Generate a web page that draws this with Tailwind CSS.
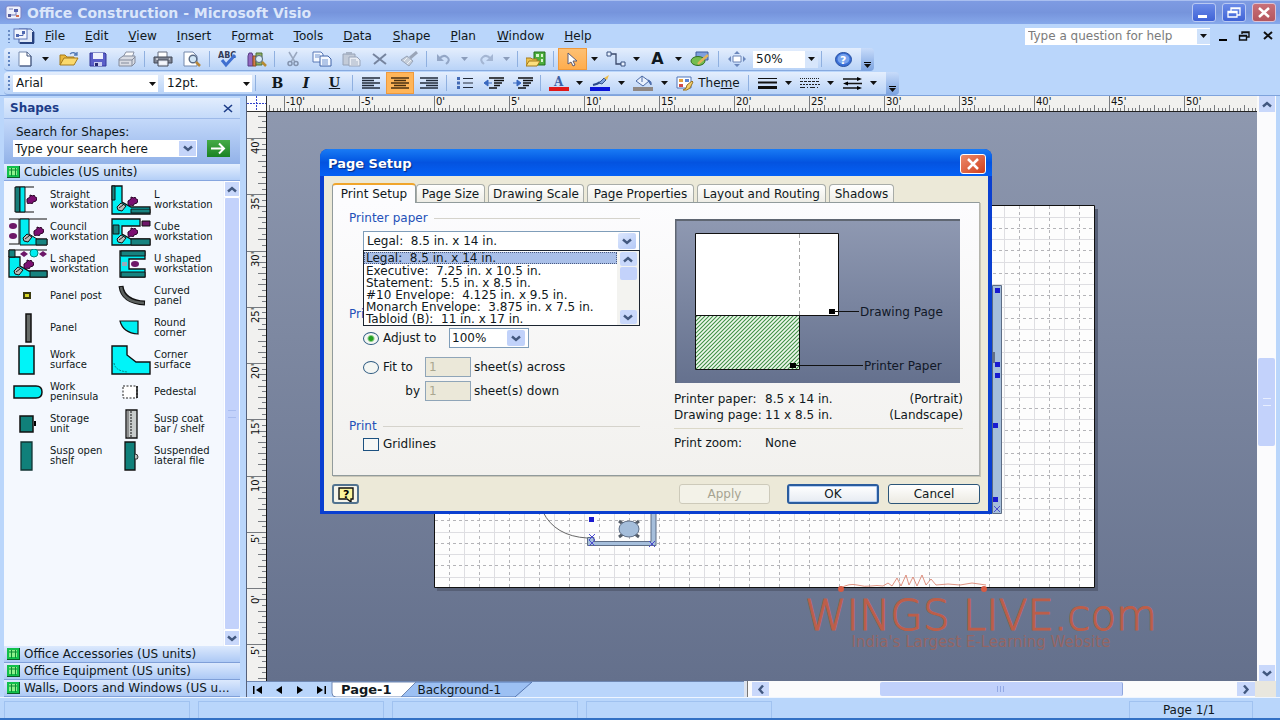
<!DOCTYPE html>
<html lang="en">
<head>
<meta charset="utf-8">
<title>Office Construction - Microsoft Visio</title>
<script src="https://cdn.jsdelivr.net/npm/@tailwindcss/browser@4"></script>
</head>
<body class="h-screen overflow-hidden bg-[#bad6fb] font-['DejaVu_Sans',Verdana,sans-serif] text-xs text-[#101820]">
<svg class="hidden">
  <defs>
    <symbol id="dd" viewBox="0 0 7 4"><path d="M0 0h7L3.500 4z" fill="#111"/></symbol>
    <symbol id="ddg" viewBox="0 0 7 4"><path d="M0 0h7L3.500 4z" fill="#8b9dbb"/></symbol>
    <symbol id="chev" viewBox="0 0 10 7"><path d="M1 1.500l4 3.500 4-3.500" fill="none" stroke="#42587f" stroke-width="2.400"/></symbol>
    <symbol id="sten" viewBox="0 0 13 12"><path d="M0 0h13v12H0z" fill="#0a5b26"/><path d="M0 0h12v11H0z" fill="#12c04c"/><path d="M2 2h8v7H2z" fill="#8df08a"/><path d="M2 4h8M4.500 2v8M8.500 2v8" stroke="#0b8a32"/></symbol>
    <symbol id="chair" viewBox="0 0 11 10"><path d="M1 5l3-2V1l3 1 1-1 1 2 2 1-1 3-3 1-1 2-2-1-2 1-1-2z" fill="#7b0f72" stroke="#2b0528"/></symbol>
    <symbol id="pc" viewBox="0 0 11 10"><path d="M1 5l4-4 5 3-4 5-4-1z" fill="#b9bdb9" stroke="#111"/><path d="M3 6l4-3" stroke="#222"/></symbol>
  </defs>
</svg>
<div class="flex h-full flex-col">

  <!-- Title bar -->
  <header class="flex h-6 shrink-0 items-center border-t border-[#a9bff0] bg-linear-to-b from-[#7e9be2] via-[#7694dc] to-[#86a8ea] pr-1 pl-[5px]">
    <svg class="h-4 w-[17px]" viewBox="0 0 17 16"><rect x="1" y="1" width="15" height="13" rx="2" fill="#eef0fb" stroke="#7c83c4"/><path d="M3 9h3v3H3z" fill="#555a9b"/><path d="M9 4h4v3H9z" fill="#5560ad"/><path d="M6 10h5V7M4 4h4" stroke="#777cb8" fill="none"/><path d="M11 10h3v2h-3z" fill="#d06b50"/></svg>
    <h1 class="ml-[5px] flex-1 text-sm font-bold text-[#dbe6fa]">Office Construction - Microsoft Visio</h1>
    <div class="flex gap-[6px]">
      <button aria-label="Minimize" class="h-[19px] w-6 rounded-[3px] border border-[#b9c9f2] bg-linear-to-b from-[#6b8be8] to-[#3f62d6]"><svg viewBox="0 0 22 17"><path d="M5 11h9v3H5z" fill="#fff"/></svg></button>
      <button aria-label="Restore" class="h-[19px] w-6 rounded-[3px] border border-[#b9c9f2] bg-linear-to-b from-[#6b8be8] to-[#3f62d6]"><svg viewBox="0 0 22 17"><path d="M8 7V4h9v7h-3M5 7.500h9V13H5zM5 8.500h9M8 4.500h9" fill="none" stroke="#fff" stroke-width="1.300"/></svg></button>
      <button aria-label="Close" class="h-[19px] w-6 rounded-[3px] border border-[#dcc2d4] bg-linear-to-b from-[#c97078] to-[#b4565e]"><svg viewBox="0 0 22 17"><path d="M6 4l10 9M16 4L6 13" stroke="#fff" stroke-width="2.500"/></svg></button>
    </div>
  </header>

  <!-- Menu bar -->
  <nav class="flex h-6 shrink-0 items-center bg-[#bad6fb] pl-2 text-xs">
    <svg class="h-4 w-7 shrink-0" viewBox="0 0 28 16"><path d="M1 2v13" stroke="#6a8cc4" stroke-width="2" stroke-dasharray="2 2"/><path d="M11 1h12l3 3v11H11z" fill="#dfe8f8" stroke="#4761a0"/><path d="M25 4v11H12" stroke="#26417f" stroke-width="2" fill="none"/><rect x="6" y="1" width="13" height="10" fill="#f2f5fd" stroke="#5d75b8"/><path d="M8 6h3v3H8zM14 3h3v3h-3z" fill="#5068b0"/><path d="M11 7.500h4V5" stroke="#5068b0" fill="none"/></svg>
    <button class="ml-[9px]"><u>F</u>ile</button>
    <button class="ml-5"><u>E</u>dit</button>
    <button class="ml-5"><u>V</u>iew</button>
    <button class="ml-5"><u>I</u>nsert</button>
    <button class="ml-5">F<u>o</u>rmat</button>
    <button class="ml-5"><u>T</u>ools</button>
    <button class="ml-5"><u>D</u>ata</button>
    <button class="ml-[21px]"><u>S</u>hape</button>
    <button class="ml-5"><u>P</u>lan</button>
    <button class="ml-[21px]"><u>W</u>indow</button>
    <button class="ml-5"><u>H</u>elp</button>
    <div class="ml-auto flex h-[17px] w-[185px] items-center bg-white">
      <input aria-label="Help question" placeholder="Type a question for help" class="min-w-0 flex-1 pl-[3px] text-xs placeholder:text-[#7b7b7b]">
      <button aria-label="Help history" class="flex h-[15px] w-[13px] items-center justify-center bg-[#cfe2fb]"><svg class="h-1 w-[7px]"><use href="#dd"/></svg></button>
    </div>
    <button aria-label="Minimize document" class="ml-2"><svg class="h-3 w-[10px]" viewBox="0 0 10 12"><path d="M1 9h8v2H1z"/></svg></button>
    <button aria-label="Restore document" class="ml-[10px]"><svg class="h-3 w-3" viewBox="0 0 12 12"><path d="M4 4V2h7v5H9M1.500 5.500h7V10h-7zM1 6h8M4 2.500h7" fill="none" stroke="#111" stroke-width="1.400"/></svg></button>
    <button aria-label="Close document" class="mr-[6px] ml-3"><svg class="h-3 w-3" viewBox="0 0 12 12"><path d="M2 2l8 7M10 2L2 9" stroke="#111" stroke-width="2"/></svg></button>
  </nav>

  <!-- Standard toolbar -->
  <div class="flex h-[23px] shrink-0 pl-1">
    <div class="flex items-center rounded-l-sm border-b border-[#86a9df] bg-linear-to-b from-[#e4eefd] to-[#b9d3f7] pr-[3px] [&>button]:flex [&>button]:h-full [&>button]:items-center [&>button]:justify-center [&>i]:mx-[3px] [&>i]:h-4 [&>i]:w-px [&>i]:bg-[#8fb0e0]">
      <svg class="h-4 w-[9px]" viewBox="0 0 9 16"><path d="M5 1v14" stroke="#5f83c0" stroke-width="2" stroke-dasharray="2 2"/></svg>
      <button aria-label="New" class="w-6"><svg class="h-4 w-4" viewBox="0 0 16 16"><path d="M2 1h8l4 4v10H2z" fill="#fff" stroke="#7489ad"/><path d="M10 1v4h4M14 5v10H3" fill="none" stroke="#3e5078"/></svg></button>
      <button aria-label="New options" class="w-[17px]"><svg class="h-1 w-[7px]"><use href="#dd"/></svg></button>
      <button aria-label="Open" class="w-[29px]"><svg class="h-4 w-5" viewBox="0 0 20 16"><path d="M1 14V4h5l2 2h7v3" fill="#e9b83c" stroke="#a57a1c"/><path d="M1 14l4-7h14l-4 7z" fill="#fbd96c" stroke="#a57a1c"/><path d="M11 3q4-3 7 1M18 1v3h-3" fill="none" stroke="#5279b5" stroke-width="1.300"/></svg></button>
      <button aria-label="Save" class="w-[29px]"><svg class="h-[15px] w-[18px]" viewBox="0 0 18 15"><path d="M1 1h15l1 1v12H1z" fill="#5b5fc8" stroke="#35389a"/><path d="M4 1h10v6H4z" fill="#eef1fc"/><path d="M5 10h8v4H5z" fill="#c9cdf0"/><path d="M6 11h3v3H6z" fill="#272a70"/></svg></button>
      <button aria-label="Publish" class="w-[29px]"><svg class="h-4 w-5" viewBox="0 0 20 16"><path d="M6 6l3-5h8l-2 6" fill="#fafafa" stroke="#8b93a5"/><path d="M2 8l4-3h12v7l-3 3H2z" fill="#d9dce4" stroke="#838b9c"/><path d="M2 9h13v6M15 9l3-3M4 12h8" fill="none" stroke="#838b9c"/></svg></button>
      <i></i>
      <button aria-label="Print" class="w-[29px]"><svg class="h-4 w-5" viewBox="0 0 20 16"><path d="M5 1h9v6H5z" fill="#fff" stroke="#666e80"/><path d="M1 6h18v6H1z" fill="#7e8493" stroke="#434957"/><path d="M5 9h10v6H5z" fill="#e9edf6" stroke="#434957"/><path d="M3 8h2M16 8h1M7 12h6" stroke="#fff"/></svg></button>
      <button aria-label="Print Preview" class="w-[29px]"><svg class="h-4 w-5" viewBox="0 0 20 16"><path d="M2 1h9l4 4v10H2z" fill="#fff" stroke="#7489ad"/><circle cx="11" cy="8" r="3.800" fill="#cfe5f6" stroke="#5a6b86" stroke-width="1.400"/><path d="M14 11l4 4" stroke="#b78638" stroke-width="2.500"/></svg></button>
      <i></i>
      <button aria-label="Spelling" class="w-[29px]"><svg class="h-[18px] w-5" viewBox="0 0 20 18"><text x="0" y="8" font-size="8" font-weight="bold" fill="#333b57">ABC</text><path d="M4 10l4 5 9-10" fill="none" stroke="#3f6fd0" stroke-width="3"/></svg></button>
      <button aria-label="Research" class="w-[29px]"><svg class="h-4 w-5" viewBox="0 0 20 16"><path d="M1 5l1-3h3l1 3v10H1z" fill="#9468c0" stroke="#543a83"/><path d="M6 5h3v10H6z" fill="#d77e4a" stroke="#8d4d25"/><path d="M9 2h6v12H9z" fill="#8fae62" stroke="#4f713a"/><circle cx="12" cy="8" r="3.500" fill="#d9ebf7" stroke="#55667d"/><path d="M15 11l4 4" stroke="#b78a33" stroke-width="2.500"/></svg></button>
      <i></i>
      <button aria-label="Cut" class="w-[29px]"><svg class="h-4 w-3" viewBox="0 0 12 16"><path d="M2 1l6 10M10 1L4 11" stroke="#9aa8bf" stroke-width="1.500"/><circle cx="3" cy="12.500" r="2" fill="none" stroke="#8393ae" stroke-width="1.500"/><circle cx="9" cy="12.500" r="2" fill="none" stroke="#8393ae" stroke-width="1.500"/></svg></button>
      <button aria-label="Copy" class="w-[29px]"><svg class="h-4 w-5" viewBox="0 0 20 16"><path d="M1 1h8l2 2v8H1z" fill="#f5f9ff" stroke="#5978b6"/><path d="M8 5h8l3 3v7H8z" fill="#f5f9ff" stroke="#3f62a8"/><path d="M3 4h5M3 6h4M10 9h6M10 11h6M10 13h6" stroke="#6f92cf"/></svg></button>
      <button aria-label="Paste" class="w-[29px]"><svg class="h-4 w-5" viewBox="0 0 20 16"><path d="M2 3h12v11H2z" fill="#c3cbd8" stroke="#96a2b6"/><path d="M5 1h6v3H5z" fill="#a8b3c5"/><path d="M8 6h8l3 3v6H8z" fill="#e8ecf3" stroke="#98a4b9"/><path d="M10 9h5M10 11h7M10 13h7" stroke="#a4b0c3"/></svg></button>
      <button aria-label="Delete" class="w-[29px]"><svg class="h-3 w-4" viewBox="0 0 16 12"><path d="M1 1l13 10M14 1L2 11" stroke="#76849e" stroke-width="2"/></svg></button>
      <button aria-label="Format Painter" class="w-[29px]"><svg class="h-4 w-5" viewBox="0 0 20 16"><path d="M18 1l-7 6" stroke="#9aa5b8" stroke-width="3"/><path d="M8 5l6 5-4 5-8-6z" fill="#c7cfda" stroke="#97a3b7"/><path d="M5 10l3-3M8 13l4-4" stroke="#eef2f8"/></svg></button>
      <i></i>
      <button aria-label="Undo" class="w-[27px]"><svg class="h-3 w-4" viewBox="0 0 16 12"><path d="M3 6q4-5 8-2t-1 7" fill="none" stroke="#93a6c6" stroke-width="2"/><path d="M1 1v7h7z" fill="#93a6c6"/></svg></button>
      <button aria-label="Undo list" class="w-[15px]"><svg class="h-1 w-[7px]"><use href="#ddg"/></svg></button>
      <button aria-label="Redo" class="w-[27px]"><svg class="h-3 w-4" viewBox="0 0 16 12"><path d="M13 6Q9 1 5 4t1 7" fill="none" stroke="#a4b6d3" stroke-width="2"/><path d="M15 1v7H8z" fill="#a4b6d3"/></svg></button>
      <button aria-label="Redo list" class="w-[15px]"><svg class="h-1 w-[7px]"><use href="#ddg"/></svg></button>
      <i></i>
      <button aria-label="Shapes" class="w-[29px]"><svg class="h-4 w-5" viewBox="0 0 20 16"><path d="M8 1h11v13H8z" fill="#4cae3d" stroke="#23701c"/><path d="M10 3h3v3h-3zM15 3h2v3h-2zM15 8h2v3h-2z" fill="#d7f5cd"/><path d="M0 15V7h5l1 1h5v2" fill="#ecc14d" stroke="#a27a1f"/><path d="M0 15l3-5h11l-3 5z" fill="#fcdf7c" stroke="#a27a1f"/></svg></button>
      <i></i>
      <button aria-label="Pointer Tool" class="ml-px w-[29px] border border-[#f09a3c] bg-linear-to-b from-[#fdc073] to-[#ffad4d]"><svg class="h-[15px] w-[13px]" viewBox="0 0 13 15"><path d="M2 1v11l3-2 2 4 2-1-2-4h4z" fill="#fff" stroke="#5b5b75"/></svg></button>
      <button aria-label="Pointer options" class="w-[14px]"><svg class="h-1 w-[7px]"><use href="#dd"/></svg></button>
      <button aria-label="Connector Tool" class="w-[29px]"><svg class="h-4 w-5" viewBox="0 0 20 16"><path d="M5 3h5v10h5" fill="none" stroke="#3b4a6b" stroke-width="1.300"/><path d="M1 1h4v4H1zM15 11h4v4h-4z" fill="#e9f2ff" stroke="#39507f"/></svg></button>
      <button aria-label="Connector options" class="w-[13px]"><svg class="h-1 w-[7px]"><use href="#dd"/></svg></button>
      <button aria-label="Text Tool" class="w-[29px] text-base font-bold">A</button>
      <button aria-label="Text options" class="w-[13px]"><svg class="h-1 w-[7px]"><use href="#dd"/></svg></button>
      <button aria-label="Drawing Tools" class="w-[30px]"><svg class="h-4 w-5" viewBox="0 0 20 16"><path d="M6 1h12v8H6z" fill="#7ea0dd" stroke="#3e5d9c"/><ellipse cx="8" cy="10" rx="7" ry="4.500" fill="#74bd50" stroke="#326f22"/><path d="M18 4l-8 7-2 2" stroke="#e0b35c" stroke-width="2.400"/></svg></button>
      <i></i>
      <button aria-label="Pan &amp; Zoom" class="w-[29px]"><svg class="h-4 w-5" viewBox="0 0 20 16"><path d="M6 5h8v6H6z" fill="#fff" stroke="#6a83b5"/><path d="M10 0l3 3H7zM10 16l3-3H7zM1 8l3-3v6zM19 8l-3-3v6z" fill="#6b87bc"/></svg></button>
      <div class="relative ml-[2px] h-[17px] w-[65px]">
        <select aria-label="Zoom" class="h-full w-full appearance-none bg-white pl-[3px] text-xs"><option>50%</option></select>
        <span class="pointer-events-none absolute inset-y-0 right-0 flex w-[13px] items-center justify-center bg-[#d7e6fb]"><svg class="h-1 w-[7px]"><use href="#dd"/></svg></span>
      </div>
      <i></i>
      <button aria-label="Help" class="ml-1 w-[29px]"><svg class="h-[15px] w-[17px]" viewBox="0 0 17 15"><ellipse cx="8.500" cy="7.500" rx="8" ry="7" fill="#3a6fd6" stroke="#2850a0"/><ellipse cx="8.500" cy="7" rx="6" ry="5" fill="#78a4ee"/><text x="5" y="12" font-size="11" font-weight="bold" fill="#fff">?</text></svg></button>
    </div>
    <button aria-label="Toolbar options" class="flex w-[13px] flex-col items-center justify-end gap-px rounded-r-sm bg-linear-to-b from-[#c8dcfa] to-[#7ba2df] pb-[3px]"><span class="h-px w-[7px] bg-black"></span><svg class="h-1 w-[7px]"><use href="#dd"/></svg></button>
  </div>

  <!-- Formatting toolbar -->
  <div class="mt-px flex h-[23px] shrink-0 pl-1">
    <div class="flex items-center rounded-l-sm border-b border-[#86a9df] bg-linear-to-b from-[#e4eefd] to-[#b9d3f7] pr-[6px] [&>button]:flex [&>button]:h-full [&>button]:items-center [&>button]:justify-center [&>i]:mx-[3px] [&>i]:h-4 [&>i]:w-px [&>i]:bg-[#8fb0e0]">
      <svg class="h-4 w-[9px]" viewBox="0 0 9 16"><path d="M5 1v14" stroke="#5f83c0" stroke-width="2" stroke-dasharray="2 2"/></svg>
      <div class="relative h-[17px] w-[145px]">
        <select aria-label="Font" class="h-full w-full appearance-none bg-white pl-[3px] text-xs"><option>Arial</option></select>
        <svg class="pointer-events-none absolute top-[7px] right-[2px] h-1 w-[7px]"><use href="#dd"/></svg>
      </div>
      <div class="relative ml-[6px] h-[17px] w-[88px]">
        <select aria-label="Font Size" class="h-full w-full appearance-none bg-white pl-[3px] text-xs"><option>12pt.</option></select>
        <svg class="pointer-events-none absolute top-[7px] right-[2px] h-1 w-[7px]"><use href="#dd"/></svg>
      </div>
      <i></i>
      <button class="ml-1 w-[29px] font-['DejaVu_Serif'] text-sm font-bold">B</button>
      <button class="w-7 font-['DejaVu_Serif'] text-sm font-bold italic">I</button>
      <button class="w-[29px] font-['DejaVu_Serif'] text-[13px] font-bold underline">U</button>
      <i></i>
      <button aria-label="Align Left" class="w-[29px]"><svg class="h-3 w-[18px]" viewBox="0 0 18 12"><path d="M0 1h18M0 3.500h12M0 6h18M0 8.500h12M0 11h18" stroke="#222b3a" stroke-width="1.300"/></svg></button>
      <button aria-label="Center" class="ml-px w-7 border border-[#f09a3c] bg-[#ffb558]"><svg class="h-3 w-[18px]" viewBox="0 0 18 12"><path d="M0 1h18M3 3.500h12M0 6h18M3 8.500h12M0 11h18" stroke="#4a3010" stroke-width="1.300"/></svg></button>
      <button aria-label="Align Right" class="w-[29px]"><svg class="h-3 w-[18px]" viewBox="0 0 18 12"><path d="M0 1h18M6 3.500h12M0 6h18M6 8.500h12M0 11h18" stroke="#222b3a" stroke-width="1.300"/></svg></button>
      <i></i>
      <button aria-label="Bullets" class="w-[29px]"><svg class="h-3 w-4" viewBox="0 0 16 12"><path d="M6 1.500h10M6 6h10M6 10.500h10" stroke="#222b3a"/><path d="M0 0h3v3H0zM0 4.500h3v3H0zM0 9h3v3H0z" fill="#4169b4"/></svg></button>
      <button aria-label="Decrease Indent" class="w-[29px]"><svg class="h-3 w-5" viewBox="0 0 20 12"><path d="M5 1h15M10 3.500h10M10 6h8M10 8.500h6M5 11h8" stroke="#111" stroke-width="1.500"/><path d="M0 6l4-3v6zM4 6h4" fill="#3868c0" stroke="#3868c0"/></svg></button>
      <button aria-label="Increase Indent" class="w-[29px]"><svg class="h-3 w-5" viewBox="0 0 20 12"><path d="M5 1h15M10 3.500h10M10 6h8M10 8.500h6M5 11h8" stroke="#111" stroke-width="1.500"/><path d="M8 6L4 3v6zM0 6h4" fill="#3868c0" stroke="#3868c0"/></svg></button>
      <i></i>
      <button aria-label="Text Color" class="w-[29px]"><svg class="h-[17px] w-5" viewBox="0 0 20 17"><text x="5" y="11" font-size="12" font-weight="bold" font-family="DejaVu Serif" fill="#3d60a4">A</text><path d="M0 12h20v4H0z" fill="#e01818"/></svg></button>
      <button aria-label="Text Color options" class="w-3"><svg class="h-1 w-[7px]"><use href="#dd"/></svg></button>
      <button aria-label="Line Color" class="w-[30px]"><svg class="h-[17px] w-5" viewBox="0 0 20 17"><path d="M3 10q5-1 7-3" stroke="#2d4a8b" stroke-width="2" fill="none"/><path d="M9 8l5-5 2 2-4 4z" fill="#7e9fda" stroke="#365590"/><path d="M14 3l5-3-2 5z" fill="#efbf4d"/><path d="M0 12h20v4H0z" fill="#0a14d8"/></svg></button>
      <button aria-label="Line Color options" class="w-[13px]"><svg class="h-1 w-[7px]"><use href="#dd"/></svg></button>
      <button aria-label="Fill Color" class="w-[30px]"><svg class="h-[17px] w-5" viewBox="0 0 20 17"><path d="M3 6l6-5 7 5-6 5z" fill="#eaf1fc" stroke="#4c6aa5"/><path d="M9 1v6M15 5q4 1 3 5l-2-3z" fill="#4c74c4" stroke="#4c6aa5"/><path d="M0 12h20v4H0z" fill="#8f8884"/></svg></button>
      <button aria-label="Fill Color options" class="w-[13px]"><svg class="h-1 w-[7px]"><use href="#dd"/></svg></button>
      <button class="w-[74px] gap-1 text-xs"><svg class="h-4 w-[18px]" viewBox="0 0 18 16"><path d="M1 2h14v11H1z" fill="#fff" stroke="#4f74b8"/><path d="M3 4h4v3H3z" fill="#e6a23c"/><path d="M9 4h4v3H9z" fill="#5a83d4"/><path d="M3 9h4v3H3z" fill="#d14b4b"/><path d="M7 15q4-1 4-5l5-4 1 1-3 6q-3 3-7 2z" fill="#f3cf6a" stroke="#9a7425"/></svg><span>The<u>m</u>e</span></button>
      <i class="ml-[5px]"></i>
      <button aria-label="Line Weight" class="w-[30px]"><svg class="h-[11px] w-[19px]" viewBox="0 0 19 11"><path d="M0 .500h19" stroke="#111"/><path d="M0 4.500h19" stroke="#111" stroke-width="2"/><path d="M0 9.500h19" stroke="#111" stroke-width="3"/></svg></button>
      <button aria-label="Line Weight options" class="w-[13px]"><svg class="h-1 w-[7px]"><use href="#dd"/></svg></button>
      <button aria-label="Line Pattern" class="w-[29px]"><svg class="h-[11px] w-5" viewBox="0 0 20 11"><path d="M0 .500h20" stroke="#222" stroke-dasharray="1 1"/><path d="M0 3.500h20" stroke="#222" stroke-dasharray="3 1"/><path d="M0 6.500h20" stroke="#222" stroke-dasharray="2 1"/><path d="M0 9.500h20" stroke="#222" stroke-dasharray="5 2 1 2"/></svg></button>
      <button aria-label="Line Pattern options" class="w-[13px]"><svg class="h-1 w-[7px]"><use href="#dd"/></svg></button>
      <button aria-label="Line Ends" class="w-[30px]"><svg class="h-[15px] w-[19px]" viewBox="0 0 19 15"><path d="M0 3h15M4 7.500h15M0 12h15" stroke="#111" stroke-width="1.300"/><path d="M14 1l5 2-5 2zM5 5.500l-5 2 5 2zM14 10l5 2-5 2z"/></svg></button>
      <button aria-label="Line Ends options" class="w-[13px]"><svg class="h-1 w-[7px]"><use href="#dd"/></svg></button>
    </div>
    <button aria-label="Toolbar options" class="flex w-[13px] flex-col items-center justify-end gap-px rounded-r-sm bg-linear-to-b from-[#c8dcfa] to-[#7ba2df] pb-[3px]"><span class="h-px w-[7px] bg-black"></span><svg class="h-1 w-[7px]"><use href="#dd"/></svg></button>
  </div>

  <main class="flex min-h-0 flex-1 border-t border-[#7fa3dc] pr-1 pl-1">
    <!-- Shapes pane -->
    <aside class="flex w-[236px] shrink-0 flex-col pt-[2px]">
      <div class="flex h-[21px] shrink-0 items-center justify-between border-b border-[#9db9e8] bg-linear-to-b from-[#e2edfd] to-[#c4daf9] pr-[7px] pl-[6px]">
        <h2 class="text-xs font-bold text-[#1c3c88]">Shapes</h2>
        <button aria-label="Close pane"><svg class="h-[9px] w-[10px]" viewBox="0 0 10 9"><path d="M1 1l8 7M9 1L1 8" stroke="#1c3c88" stroke-width="1.600"/></svg></button>
      </div>
      <div class="h-[45px] shrink-0 bg-linear-to-b from-[#c4d9fa] to-[#92b2e8] pt-[6px] pl-[9px]">
        <label for="find" class="block pl-[3px] text-xs leading-[14px]">Search for Shapes:</label>
        <div class="mt-px flex">
          <div class="flex h-[17px] w-[184px] bg-white">
            <input id="find" value="Type your search here" class="min-w-0 flex-1 pl-[2px] text-xs">
            <button aria-label="Recent searches" class="flex w-[19px] items-center justify-center border border-white bg-[#c5d5fa]"><svg class="h-[7px] w-[10px]"><use href="#chev"/></svg></button>
          </div>
          <button aria-label="Search" class="ml-[10px] h-[17px] w-[23px] bg-linear-to-b from-[#45ab47] to-[#188322]"><svg viewBox="0 0 23 17"><path d="M4 8.500h13M12 3.500l5 5-5 5" fill="none" stroke="#fff" stroke-width="2"/></svg></button>
        </div>
      </div>
      <button class="flex h-[17px] shrink-0 items-center gap-1 border-b border-[#86a6df] bg-linear-to-b from-[#e4effe] to-[#b4cff7] pl-[3px] text-xs"><svg class="h-3 w-[13px]"><use href="#sten"/></svg>Cubicles (US units)</button>
      <div class="flex min-h-0 flex-1 bg-[#f4f8fe]">
        <ul class="grid flex-1 auto-rows-[32px] grid-cols-[104px_1fr] content-start pt-[3px] text-[10px] leading-[10px] [&>li]:flex [&>li]:items-center [&>li]:gap-[2px] [&>li>svg]:h-[30px] [&>li>svg]:w-11 [&>li>svg]:shrink-0">
          <li><svg viewBox="0 0 44 30"><path d="M12 2h18M12 27h18" stroke="#111"/><path d="M11 2h5v25h-5z" fill="#167c78" stroke="#111"/><path d="M16 2h5v25h-5z" fill="#00e8ee" stroke="#111"/><use href="#chair" x="22" y="9" width="11" height="10"/></svg>Straight<br>workstation</li>
          <li><svg viewBox="0 0 44 30"><path d="M4 1h10v16l9 5h19v7H4z" fill="#00eef2" stroke="#111" stroke-width="1.300"/><path d="M4 1h3v14H4zM23 24h19v4H23z" fill="#178380" stroke="#111"/><use href="#chair" x="19" y="11" width="11" height="10"/><use href="#pc" x="8" y="17" width="11" height="10"/></svg>L<br>workstation</li>
          <li><svg viewBox="0 0 44 30"><path d="M5 2h38M5 27h10M15 2v25" stroke="#111"/><path d="M16 2h9v15l8 5h10v6H16z" fill="#00eef2" stroke="#111"/><path d="M32 22h11v6H32z" fill="#178380" stroke="#111"/><ellipse cx="9" cy="9" rx="4" ry="3" fill="#6d1768"/><ellipse cx="9" cy="19" rx="4" ry="3" fill="#6d1768"/><use href="#chair" x="29" y="9" width="11" height="10"/><use href="#pc" x="18" y="16" width="11" height="10"/></svg>Council<br>workstation</li>
          <li><svg viewBox="0 0 44 30"><path d="M4 2h28v7H14v8l9 5h19v6H4z" fill="#00eef2" stroke="#111" stroke-width="1.300"/><path d="M5 8h6v9H5zM23 22h19v6H23z" fill="#178380" stroke="#111"/><path d="M34 4h8v5h-8z" fill="#6d1768" stroke="#111"/><use href="#chair" x="19" y="10" width="11" height="10"/><use href="#pc" x="8" y="17" width="11" height="10"/></svg>Cube<br>workstation</li>
          <li><svg viewBox="0 0 44 30"><path d="M5 1h38M5 1v7" stroke="#111"/><path d="M5 8h11v9l9 5h18v6H5z" fill="#00eef2" stroke="#111" stroke-width="1.300"/><path d="M26 22h17v6H26zM5 1h6v7H5z" fill="#178380" stroke="#111"/><path d="M20 2l4 3-4 3-4-3zM39 2l4 3-4 3-4-3z" fill="#6d1768"/><circle cx="30" cy="4" r="4" fill="#00eef2" stroke="#087"/><use href="#chair" x="19" y="10" width="11" height="10"/><use href="#pc" x="9" y="17" width="11" height="10"/></svg>L shaped<br>workstation</li>
          <li><svg viewBox="0 0 44 30"><path d="M12 2h25v8H21v10h16v8H12z" fill="#00eef2" stroke="#111" stroke-width="1.300"/><path d="M13 2h24v5H13zM13 23h24v5H13z" fill="#178380" stroke="#111"/><ellipse cx="27" cy="15" rx="4" ry="3" fill="#6d1768"/><path d="M14 13h5v4h-5z" fill="#9ab"/></svg>U shaped<br>workstation</li>
          <li><svg viewBox="0 0 44 30"><path d="M20 12h6v5h-6z" fill="#d6d626" stroke="#3a3a10" stroke-width="2"/></svg>Panel post</li>
          <li><svg viewBox="0 0 44 30"><path d="M13 5q2 16 24 17" fill="none" stroke="#111" stroke-width="5"/><path d="M13 6q2 15 23 16" fill="none" stroke="#5b605e" stroke-width="2.500"/></svg>Curved<br>panel</li>
          <li><svg viewBox="0 0 44 30"><path d="M22 1h5v28h-5z" fill="#666b68" stroke="#111" stroke-width="1.500"/></svg>Panel</li>
          <li><svg viewBox="0 0 44 30"><path d="M12 8h18v13q-15-1-18-13z" fill="#00eef2" stroke="#111" stroke-width="1.200"/></svg>Round<br>corner</li>
          <li><svg viewBox="0 0 44 30"><path d="M15 1h15v28H15z" fill="#00f4f8" stroke="#111" stroke-width="1.500"/></svg>Work<br>surface</li>
          <li><svg viewBox="0 0 44 30"><path d="M4 1h15v9l9 7h14v12H4z" fill="#00f4f8" stroke="#111" stroke-width="1.400"/><path d="M6 18q1 8 14 9" fill="none" stroke="#088" stroke-dasharray="2 1"/></svg>Corner<br>surface</li>
          <li><svg viewBox="0 0 44 30"><path d="M10 9h22q6 0 6 6t-6 6H10z" fill="#00eef2" stroke="#111" stroke-width="1.500"/></svg>Work<br>peninsula</li>
          <li><svg viewBox="0 0 44 30"><path d="M15 9h14v12H15z" fill="#fff" stroke="#222" stroke-dasharray="2 1.500"/><path d="M29 9v12" stroke="#111" stroke-width="1.500"/></svg>Pedestal</li>
          <li><svg viewBox="0 0 44 30"><path d="M16 7h13v16H16z" fill="#10807a" stroke="#111" stroke-width="1.500"/><path d="M30 12h2v5h-2z"/></svg>Storage<br>unit</li>
          <li><svg viewBox="0 0 44 30"><path d="M18 1h11v28H18z" fill="#c8cccb" stroke="#111" stroke-width="1.300"/><path d="M20 1v28" stroke="#555"/><path d="M23 2v26" stroke="#111" stroke-dasharray="2 1"/></svg>Susp coat<br>bar / shelf</li>
          <li><svg viewBox="0 0 44 30"><path d="M17 1h11v28H17z" fill="#10807a" stroke="#133" stroke-width="1.300"/></svg>Susp open<br>shelf</li>
          <li><svg viewBox="0 0 44 30"><path d="M17 1h10v28H17z" fill="#10807a" stroke="#111" stroke-width="1.300"/><path d="M27 13q3 0 3 3t-3 2" fill="#bbb" stroke="#333"/></svg>Suspended<br>lateral file</li>
        </ul>
        <div class="flex w-[17px] shrink-0 flex-col items-center bg-[#eef3fd]">
          <button aria-label="Scroll up" class="flex h-4 w-4 items-center justify-center border border-white bg-[#c9d8fb]"><svg class="h-[7px] w-[10px] rotate-180"><use href="#chev"/></svg></button>
          <div class="flex w-4 flex-1 items-center justify-center rounded-xs border border-white bg-[#c3d2fb]"><span class="h-2 w-2 border-y border-[#a9bdf0]"></span></div>
          <button aria-label="Scroll down" class="flex h-4 w-4 items-center justify-center border border-white bg-[#c9d8fb]"><svg class="h-[7px] w-[10px]"><use href="#chev"/></svg></button>
        </div>
      </div>
      <div class="flex shrink-0 flex-col text-xs [&>button]:flex [&>button]:h-[17px] [&>button]:items-center [&>button]:gap-1 [&>button]:border-b [&>button]:border-[#7f9fd8] [&>button]:bg-linear-to-b [&>button]:from-[#dce9fd] [&>button]:to-[#adc9f5] [&>button]:pl-[3px] [&>button]:whitespace-nowrap">
        <button><svg class="h-3 w-[13px]"><use href="#sten"/></svg>Office Accessories (US units)</button>
        <button><svg class="h-3 w-[13px]"><use href="#sten"/></svg>Office Equipment (US units)</button>
        <button><svg class="h-3 w-[13px]"><use href="#sten"/></svg>Walls, Doors and Windows (US u...</button>
      </div>
    </aside>

    <!-- Drawing window -->
    <section class="ml-[6px] flex min-w-0 flex-1 flex-col border-l border-[#55617a]">
      <div class="flex h-4 shrink-0">
        <div class="w-5 shrink-0 border-r border-b border-[#333] bg-white"><svg viewBox="0 0 19 14"><path d="M9.500 0v14M0 7.500h19" stroke="#3344cc" stroke-dasharray="2 1"/></svg></div>
        <svg id="hruler" class="h-full min-w-0 flex-1 border-b border-[#222] bg-[#f1f1ef]"></svg>
        <div class="w-[19px] shrink-0 bg-[#fafafa]"></div>
      </div>
      <div class="flex min-h-0 flex-1">
        <svg id="vruler" class="h-full w-5 shrink-0 border-r border-[#111] bg-[#f1f1ef]"></svg>
        <div class="relative min-w-0 flex-1 overflow-hidden bg-linear-to-b from-[#8e98af] to-[#64708c]">
          <svg id="canvas" class="h-full w-full"></svg>
        </div>
        <div class="flex w-[19px] shrink-0 flex-col items-center bg-[#fbfbfd]">
          <button aria-label="Scroll up" class="-mt-4 flex h-4 w-4 items-center justify-center bg-[#c9d8fb]"><svg class="h-[7px] w-[10px] rotate-180"><use href="#chev"/></svg></button>
          <div class="mt-[246px] flex h-[88px] w-[17px] items-center justify-center rounded-xs bg-[#c3d2fb]"><span class="h-2 w-2 border-y border-[#e8eefe]"></span></div>
          <button aria-label="Scroll down" class="mt-auto flex h-4 w-4 items-center justify-center bg-[#c9d8fb]"><svg class="h-[7px] w-[10px]"><use href="#chev"/></svg></button>
        </div>
      </div>
      <div class="flex h-4 shrink-0 bg-[#b9d5fb]">
        <div class="flex items-center border-t border-[#6f87b2] [&>button]:flex [&>button]:w-[21px] [&>button]:justify-center">
          <button aria-label="First page"><svg class="h-2 w-[10px]" viewBox="0 0 10 8"><path d="M0 0h1.500v8H0zM9 0v8L3 4z"/></svg></button>
          <button aria-label="Previous page"><svg class="h-2 w-[10px]" viewBox="0 0 10 8"><path d="M8 0v8L2 4z"/></svg></button>
          <button aria-label="Next page"><svg class="h-2 w-[10px]" viewBox="0 0 10 8"><path d="M2 0v8l6-4z"/></svg></button>
          <button aria-label="Last page"><svg class="h-2 w-[10px]" viewBox="0 0 10 8"><path d="M8.500 0H10v8H8.500zM1 0v8l6-4z"/></svg></button>
        </div>
        <div class="relative flex flex-1 border-t border-[#6f87b2]">
          <svg class="absolute inset-0 h-full w-full"><path d="M68 15l15-15h118l-17 15z" fill="#9cc0f3" stroke="#5776b0"/><path d="M1 0v11q0 4 4 4h65l15-15z" fill="#fff" stroke="#7088b3"/></svg>
          <button class="relative ml-[10px] text-[13px] leading-[14px] font-bold">Page-1</button>
          <button class="relative ml-[26px] text-xs leading-[14px]">Background-1</button>
        </div>
        <div class="ml-auto flex h-4 w-[532px] shrink-0 items-center bg-[#fbfbfc]">
          <span class="mr-1 h-full w-1 border-r border-[#777] bg-[#dde3ee]"></span>
          <button aria-label="Scroll left" class="flex h-[14px] w-[17px] items-center justify-center bg-[#c9d8fb]"><svg class="h-[7px] w-[10px] rotate-90"><use href="#chev"/></svg></button>
          <div class="ml-[111px] flex h-[14px] w-[243px] items-center justify-center rounded-xs border-r border-[#8fa6de] bg-[#c1d1fb]"><span class="h-[6px] w-2 bg-[repeating-linear-gradient(to_right,#93a9e4_0_1px,transparent_1px_3px)]"></span></div>
          <button aria-label="Scroll right" class="ml-auto flex h-[14px] w-[18px] items-center justify-center bg-[#c9d8fb]"><svg class="h-[7px] w-[10px] -rotate-90"><use href="#chev"/></svg></button>
          <span class="h-full w-[21px] bg-[#e9e7de]"></span>
        </div>
      </div>
    </section>
  </main>

  <!-- Status bar -->
  <footer class="flex h-[23px] shrink-0 gap-2 border-t border-b-2 border-t-[#eef5ff] border-b-[#3371c4] bg-[#b9d6fb] pt-[3px] pr-[27px] pl-1">
    <span class="w-[186px] border border-b-0 border-[#a0c2f0]"></span>
    <span class="w-[186px] border border-b-0 border-[#a0c2f0]"></span>
    <span class="w-[186px] border border-b-0 border-[#a0c2f0]"></span>
    <span class="w-[186px] border border-b-0 border-[#a0c2f0]"></span>
    <span class="flex-1"></span>
    <span class="w-[124px] border border-b-0 border-[#a0c2f0] pr-1 text-center text-xs leading-4">Page 1/1</span>
  </footer>
</div>

<!-- Page Setup dialog -->
<div role="dialog" aria-labelledby="dlg" class="absolute top-[149px] left-[320px] flex w-[672px] flex-col rounded-t-lg bg-[#0a3fd0] px-1 pb-[3px]">
  <div class="-mx-1 flex h-[27px] items-center justify-between rounded-t-lg bg-linear-to-b from-[#1a7bf5] via-[#0453e0] to-[#0561f5] pt-[2px] pr-[6px] pl-2">
    <h2 id="dlg" class="text-[13px] font-bold text-white [text-shadow:1px_1px_1px_#0a2a80]">Page Setup</h2>
    <button aria-label="Close" class="h-5 w-[26px] rounded-[3px] border border-white bg-linear-to-br from-[#ec8a6a] to-[#cf3c16]"><svg viewBox="0 0 24 18"><path d="M7 4l10 10M17 4L7 14" stroke="#fff" stroke-width="2.500"/></svg></button>
  </div>
  <div class="bg-[#ece9d8] px-2 pt-[7px] pb-[7px]">
    <div role="tablist" class="flex items-end text-xs [&>button+button]:mr-[3px] [&>button+button]:h-[18px] [&>button+button]:bg-linear-to-b [&>button+button]:from-white [&>button+button]:to-[#eeede6]">
      <button role="tab" aria-selected="true" class="z-10 -mb-px h-5 w-[84px] rounded-t-sm border border-t-2 border-b-0 border-[#919b9c] border-t-[#f0a52c] bg-[#fcfcfe] whitespace-nowrap">Print Setup</button>
      <button role="tab" class="w-[69px] rounded-t-sm border border-b-0 border-[#a8aca8] whitespace-nowrap">Page Size</button>
      <button role="tab" class="w-[96px] rounded-t-sm border border-b-0 border-[#a8aca8] whitespace-nowrap">Drawing Scale</button>
      <button role="tab" class="w-[107px] rounded-t-sm border border-b-0 border-[#a8aca8] whitespace-nowrap">Page Properties</button>
      <button role="tab" class="w-[129px] rounded-t-sm border border-b-0 border-[#a8aca8] whitespace-nowrap">Layout and Routing</button>
      <button role="tab" class="w-[65px] rounded-t-sm border border-b-0 border-[#a8aca8] whitespace-nowrap">Shadows</button>
    </div>
    <div role="tabpanel" class="flex h-[274px] justify-between border border-[#919b9c] border-r-[#b5b5ae] bg-linear-to-b from-[#fcfcfe] to-[#f2f1ee] pt-[7px] pr-4 pl-4 text-xs shadow-[1px_1px_0_#c9c6b8]">
      <div class="w-[291px]">
        <div class="flex h-4 items-center gap-[6px] text-[#2450b8]">Printer paper<span class="h-px flex-1 bg-[#d5d3cc]"></span></div>
        <div class="relative mt-[5px] ml-[14px] h-5">
          <select aria-label="Printer paper" class="h-full w-full appearance-none border border-[#7f9db9] bg-white pl-[3px]"><option>Legal:&nbsp; 8.5 in. x 14 in.</option></select>
          <span class="pointer-events-none absolute top-[2px] right-1 flex h-4 w-[18px] items-center justify-center rounded-xs bg-linear-to-br from-[#dce7fe] to-[#b4c9f6]"><svg class="h-[7px] w-[10px]"><use href="#chev"/></svg></span>
          <div class="absolute top-[19px] left-0 z-10 flex w-full border border-[#1b2430] bg-white">
            <ul role="listbox" aria-label="Paper sizes" class="flex-1 pt-px leading-3 [&>li]:h-3 [&>li]:pl-[2px] [&>li]:whitespace-pre">
              <li role="option" aria-selected="true" class="mb-px border border-dotted border-[#4a5a80] bg-[#a9bfe8] pl-px! leading-[11px]!">Legal:  8.5 in. x 14 in.</li>
              <li role="option">Executive:  7.25 in. x 10.5 in.</li>
              <li role="option">Statement:  5.5 in. x 8.5 in.</li>
              <li role="option">#10 Envelope:  4.125 in. x 9.5 in.</li>
              <li role="option">Monarch Envelope:  3.875 in. x 7.5 in.</li>
              <li role="option">Tabloid (B):  11 in. x 17 in.</li>
            </ul>
            <div class="flex w-[22px] flex-col items-center bg-[#f3f3f0] py-px">
              <button aria-label="Scroll up" class="flex h-[14px] w-[17px] items-center justify-center rounded-xs bg-[#c9d8fb]"><svg class="h-[7px] w-[10px] rotate-180"><use href="#chev"/></svg></button>
              <span class="mt-px h-[13px] w-[17px] rounded-xs bg-[#c3d2fb]"></span>
              <button aria-label="Scroll down" class="mt-auto flex h-[14px] w-[17px] items-center justify-center rounded-xs bg-[#c9d8fb]"><svg class="h-[7px] w-[10px]"><use href="#chev"/></svg></button>
            </div>
          </div>
        </div>
        <div class="mt-[55px] flex h-4 items-center gap-[6px] text-[#2450b8]">Print zoom<span class="h-px flex-1 bg-[#d5d3cc]"></span></div>
        <div class="mt-[6px] ml-[14px] flex h-5 items-center">
          <input type="radio" name="zoom" id="adj" checked class="h-[13px] w-4 appearance-none rounded-[50%] border border-[#2d5a80] bg-[#f4f6f3] checked:bg-[radial-gradient(circle,#23a121_0_2px,#f4f6f3_4px)]"><label for="adj" class="ml-1 w-[66px]">Adjust to</label>
          <div class="relative h-5 w-20">
            <select aria-label="Adjust percentage" class="h-full w-full appearance-none border border-[#7f9db9] bg-white pl-[2px]"><option>100%</option></select>
            <span class="pointer-events-none absolute top-[2px] right-1 flex h-4 w-[18px] items-center justify-center rounded-xs bg-[#c1d2fa]"><svg class="h-[7px] w-[10px]"><use href="#chev"/></svg></span>
          </div>
        </div>
        <div class="mt-[9px] ml-[14px] flex h-5 items-center">
          <input type="radio" name="zoom" id="fit" class="h-[13px] w-4 appearance-none rounded-[50%] border border-[#2d5a80] bg-[#f4f6f3]"><label for="fit" class="ml-1 w-[42px]">Fit to</label>
          <input id="across" value="1" disabled class="h-5 w-[46px] border border-[#8fa5b8] bg-[#ebe8d9] pl-[3px] text-[#aaa790]"><label for="across" class="ml-[3px]">sheet(s) across</label>
        </div>
        <div class="mt-1 ml-[14px] flex h-5 items-center">
          <span class="w-[62px] pr-[5px] text-right">by</span>
          <input id="down" value="1" disabled class="h-5 w-[46px] border border-[#8fa5b8] bg-[#ebe8d9] pl-[3px] text-[#aaa790]"><label for="down" class="ml-[3px]">sheet(s) down</label>
        </div>
        <div class="mt-[17px] flex h-4 items-center gap-[6px] text-[#2450b8]">Print<span class="h-px flex-1 bg-[#d5d3cc]"></span></div>
        <div class="mt-[2px] ml-[14px] flex h-4 items-center">
          <input type="checkbox" id="grid" class="h-[13px] w-4 appearance-none border border-[#1c5180] bg-[#f6f7f5]"><label for="grid" class="ml-1">Gridlines</label>
        </div>
      </div>
      <div class="w-[289px]">
        <svg class="mt-[9px] ml-px h-[164px] w-[285px]" viewBox="1 0 285 164">
          <defs>
            <linearGradient id="pg" x2="0" y2="1"><stop stop-color="#8f99b2"/><stop offset="1" stop-color="#65718e"/></linearGradient>
            <pattern id="hatch" width="4" height="4" patternUnits="userSpaceOnUse"><path d="M-1 5L5-1M-1 1l2-2M3 5l2-2" stroke="#3f8f45" stroke-width="1.100"/></pattern>
          </defs>
          <path d="M1 0h286v164H1z" fill="url(#pg)"/><path d="M1.500 164V1H287" fill="none" stroke="#5f6672" stroke-width="2"/>
          <path d="M21.500 14.500h143v82h-143z" fill="#fff" stroke="#111"/>
          <path d="M125.500 15v82" stroke="#a5a5a5" stroke-dasharray="4 3"/>
          <path d="M21.500 96.500h104v54h-104z" fill="#eff9ee"/><path d="M21.500 96.500h104v54h-104z" fill="url(#hatch)" stroke="#111"/>
          <path d="M155 90h6v5h-6zM116 144h6v5h-6z"/><path d="M160 92.500h25M121 146.500h68" stroke="#111"/>
          <text x="186" y="97" font-size="12" fill="#111827">Drawing Page</text>
          <text x="190" y="151" font-size="12" fill="#111827">Printer Paper</text>
        </svg>
        <dl class="mt-2 grid grid-cols-[91px_1fr_auto] leading-4">
          <dt>Printer paper:</dt><dd>8.5 x 14 in.</dd><dd class="text-right">(Portrait)</dd>
          <dt>Drawing page:</dt><dd>11 x 8.5 in.</dd><dd class="text-right">(Landscape)</dd>
        </dl>
        <div class="mt-[5px] grid grid-cols-[91px_1fr] border-t border-[#dbd8c8] pt-[6px] leading-4"><span>Print zoom:</span><span>None</span></div>
      </div>
    </div>
    <div class="mt-2 flex h-5 items-center text-xs">
      <button aria-label="Help" class="flex h-5 w-[27px] items-center justify-center rounded-[3px] border-2 border-[#52738f] bg-[#f5f4ea]"><svg class="h-[15px] w-[18px]" viewBox="0 0 18 15"><path d="M2 1h14v11h-2v3l-4-3H2z" fill="#fbf59c" stroke="#111" stroke-width="1.400"/><text x="6" y="11" font-size="11" font-weight="bold">?</text></svg></button>
      <button disabled class="ml-auto h-5 w-[91px] rounded-[3px] border border-[#cdcaba] bg-[#f3f2e8] text-[#a6a391]">Apply</button>
      <button class="ml-[17px] h-5 w-[92px] rounded-[3px] border-2 border-[#2a5c9e] bg-linear-to-b from-white to-[#e6ebf2] leading-4 shadow-[inset_0_0_0_1px_#b5cff4]">OK</button>
      <button class="ml-[9px] h-5 w-[92px] rounded-[3px] border border-[#2b5579] bg-linear-to-b from-white to-[#eceae2]">Cancel</button>
    </div>
  </div>
</div>
<svg class="pointer-events-none absolute top-[262px] left-[621px] h-[22px] w-4" viewBox="0 0 16 22"><path d="M2 1v16l4-3 3 6 3-1-3-6h5z" fill="#fff" stroke="#1b2338" stroke-width="1.300"/></svg>

<script>
  // Horizontal ruler: 15px per foot, 0' at x=167; vertical ruler: 225px per 20 feet, 0' at y=476.
  var h = '', v = '';
  for (var i = -44; i <= 220; i++) {
    var x = 167 + i * 15 / 4, len = i % 20 === 0 ? 16 : i % 4 === 0 ? 7 : 4;
    if (x < 990) h += '<path d="M' + x.toFixed(0) + '.500 16v-' + len + '" stroke="#777b80"/>';
    if (i % 20 === 0 && x < 960) h += '<text x="' + (x + 2).toFixed(0) + '" y="9" font-size="10" fill="#111">' + i / 4 + "'</text>";
  }
  for (var j = -32; j <= 168; j++) {
    var y = 476 - j * 225 / 80, l = j % 20 === 0 ? 20 : j % 4 === 0 ? 9 : 5;
    if (j % 2 === 0) v += '<path d="M20 ' + y.toFixed(0) + '.500h-' + l + '" stroke="#777b80"/>';
    if (j % 20 === 0) v += '<text transform="translate(12 ' + (y + (j % 40 && Math.abs(j) < 40 ? 11 : 16)).toFixed(0) + ') rotate(-90)" font-size="10" fill="#111">' + Math.abs(j / 4) + "'</text>";
  }
  document.getElementById('hruler').innerHTML = h;
  document.getElementById('vruler').innerHTML = v;

  // Drawing page with foot grid, wall segments and the site watermark.
  var c = '<path d="M170 97h661v382H170z" fill="#565f76"/><path d="M167.500 93.500h660v382h-660z" fill="#fdfdfd" stroke="#111"/>';
  for (var a = 1; a < 44; a++) c += '<path d="M' + (167 + a * 15) + '.500 94v381" stroke="' + (a % 2 ? '#b4b4b8" stroke-dasharray="3 3' : '#dedee2') + '"/>';
  for (var b = 1; b < 34; b++) c += '<path d="M168 ' + (476 - Math.round(b * 11.25)) + '.500h659" stroke="' + (b % 2 ? '#dedee2' : '#b4b4b8" stroke-dasharray="3 3') + '"/>';
  c += '<g stroke="#5d6d85" fill="#a5bedb"><path d="M725.500 173.500h9v228h-9z"/><path d="M320.500 425.500v8h68.500v-60h-5v56h-57v-4z"/><path d="M276 400q12 24 44 26" fill="none" stroke="#666"/>'
    + '<path d="M352 409l4 3M372 409l-4 3M352 425l4-3M372 425l-4-3" stroke="#555d68" stroke-width="3"/><ellipse cx="362" cy="417" rx="10" ry="8"/></g>'
    + '<path d="M727 240v11" stroke="#223" stroke-width="1"/>';
  [[322,405],[728,176],[728,250],[728,261],[726,311],[726,385]].forEach(function (p) { c += '<path d="M' + p[0] + ' ' + p[1] + 'h5v5h-5z" fill="#1a1ad0"/>'; });
  [[322,422],[322,428],[382,429],[727,394]].forEach(function (p) { c += '<path d="M' + p[0] + ' ' + p[1] + 'l6 6m0-6l-6 6" stroke="#4b4bcf"/>'; });
  c += '<path d="M574 476q8-5 16-3t14 1 12 0l5-3 4 3 5-8 4 8 5-11 3 10 4-8 4 9 5-11 4 10 5-6 5 6 12-1 12 1 12-2 14 2" fill="none" stroke="#d5705a" stroke-opacity=".75"/><circle cx="574" cy="477" r="3" fill="#d65a42"/><circle cx="717" cy="477" r="3" fill="#d65a42"/>'
    + '<text x="714" y="518" text-anchor="middle" font-size="42" font-weight="200" fill="#bd5e49" stroke="#bd5e49">WINGS LIVE.com</text>'
    + '<text x="714" y="535" text-anchor="middle" font-size="15" fill="#a9604f" fill-opacity=".7">India\'s Largest E-Learning Website</text>';
  document.getElementById('canvas').innerHTML = c;
</script>
</body>
</html>
